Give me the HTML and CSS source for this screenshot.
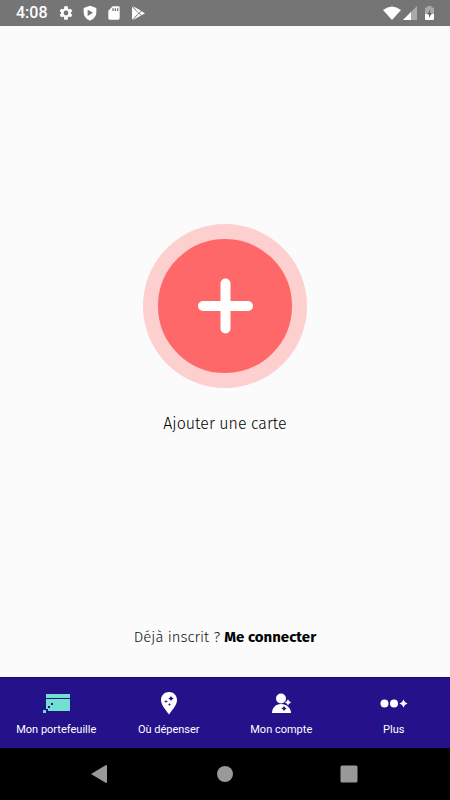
FILE: index.html
```html
<!DOCTYPE html>
<html lang="fr">
<head>
<meta charset="utf-8">
<meta name="viewport" content="width=device-width, initial-scale=1">
<title>Mon portefeuille</title>
<link rel="stylesheet" href="styles.css">
</head>
<body>
<header class="status">
  <time class="clock">4:08</time>
  <div class="notifications">
    <svg width="16" height="16" viewBox="0 0 24 24" aria-hidden="true"><path fill="#fff" fill-rule="evenodd" d="M19.4 13a7.500 7.500 0 0 0 0-2l2.100-1.600-2.200-3.800-2.600 1a8 8 0 0 0-1.700-1L14.600 2H9.400L9 5.600a8 8 0 0 0-1.700 1l-2.600-1-2.200 3.800L4.600 11a7.500 7.500 0 0 0 0 2l-2.100 1.600 2.200 3.800 2.600-1a8 8 0 0 0 1.700 1l.4 3.600h5.200l.4-3.600a8 8 0 0 0 1.700-1l2.600 1 2.200-3.800zM12 15.600a3.600 3.600 0 1 1 0-7.200 3.600 3.600 0 0 1 0 7.200z"/></svg>
    <svg width="16" height="16" viewBox="0 0 24 24" aria-hidden="true"><path fill="#fff" fill-rule="evenodd" d="M12 1l9.500 3.500V11c0 5.800-4 10.500-9.500 12.500C6.500 21.500 2.500 16.800 2.500 11V4.500zM8.500 7v9.500l8-4.700z"/></svg>
    <svg width="16" height="16" viewBox="0 0 24 24" aria-hidden="true"><path fill="#fff" fill-rule="evenodd" d="M10 2h8.500A2 2 0 0 1 20.500 4v16a2 2 0 0 1-2 2h-13a2 2 0 0 1-2-2V8.500zM9.500 5v4h2V5zm3.500 0v4h2V5zm3.500 0v4h2V5z"/></svg>
    <svg width="16" height="16" viewBox="0 0 24 24" aria-hidden="true"><path fill="#fff" d="M4 1.500l12.500 7.200-3.200 3.200zM3 2.500l9.500 9.800L3 22zM4 23l9.300-9.800 3.200 2.600zM17.500 9.300L22.500 12.300l-5 3-3.200-3z"/></svg>
  </div>
  <div class="signals">
    <svg width="18" height="14" viewBox="0 0 18 14" aria-hidden="true"><path fill="#fff" d="M0 4Q9-3 18 4L9 14z"/></svg>
    <svg width="14" height="14" viewBox="0 0 14 14" aria-hidden="true"><path fill="#aaa" d="M14 0v14H0z"/><path fill="#fff" d="M8 6v8H0z"/></svg>
    <svg class="battery" width="9" height="14" viewBox="0 0 9 14" aria-hidden="true"><path fill="#aaa" d="M2.500 0h4v1.500H8q1 0 1 1V8H0V2.500q0-1 1-1h1.500z"/><path fill="#fff" d="M0 8h9v5q0 1-1 1H1q-1 0-1-1z"/><path fill="#666" d="M5.500 3L2 8.500h2V12l3-5H5z"/></svg>
  </div>
</header>
<main class="wallet">
  <section class="add">
    <button class="add-button" type="button" aria-labelledby="add-label">
      <svg width="56" height="56" viewBox="0 0 56 56" aria-hidden="true"><path d="M28.500 5.500v45M6 28h45" stroke="#fff" stroke-width="10" stroke-linecap="round"/></svg>
    </button>
    <span class="add-label" id="add-label">Ajouter une carte</span>
  </section>
  <p class="login">Déjà inscrit ? <a href="#connexion">Me connecter</a></p>
</main>
<nav class="tabs">
  <a class="tab" href="#portefeuille" aria-current="page">
    <svg width="28" height="24" viewBox="0 0 28 24" aria-hidden="true"><g fill="#72e0d1"><path d="M4 2h24v4H4zM4 7h24v12H6v-2H4z"/><path d="M1 18h3v3H1z"/></g><path fill="#25128a" d="M6 14h2v2H6zM9 11h2v2H9z"/></svg>
    <span>Mon portefeuille</span>
  </a>
  <a class="tab" href="#depenser">
    <svg width="28" height="24" viewBox="0 0 28 24" aria-hidden="true"><path fill="#fff" d="M14 0c4.500 0 8 3.500 8 8 0 5-4 9-8 14.500C10 17 6 13 6 8c0-4.500 3.500-8 8-8z"/><path fill="#25128a" d="M16 4l1 1.500 1.700 1-1.700 1L16 9l-1-1.500-1.700-1 1.700-1zM11 8l.6 1.100 1.400.4-1.400.5L11 11l-.6-1-1.400-.5 1.400-.4zM14.500 11l.5 1 1 .5-1 .5-.5 1-.5-1-1-.5 1-.5z"/></svg>
    <span>Où dépenser</span>
  </a>
  <a class="tab" href="#compte">
    <svg width="28" height="24" viewBox="0 0 28 24" aria-hidden="true"><circle cx="14" cy="6.500" r="5" fill="#fff"/><path fill="#fff" d="M5 21c0-5 3.500-9 9-9s10 4 10 9z"/><path fill="#fff" stroke="#25128a" stroke-width=".4" d="M21 7l1.300 2.100 2.100 1.300-2.100 1.300-1.300 2.100-1.300-2.100-2.100-1.300 2.100-1.300z"/><path fill="#25128a" d="M17 14l1 1.500 1.700 1-1.700 1L17 19l-1-1.500-1.700-1 1.700-1z"/></svg>
    <span>Mon compte</span>
  </a>
  <a class="tab" href="#plus">
    <svg width="28" height="24" viewBox="0 0 28 24" aria-hidden="true"><g fill="#fff"><circle cx="4.500" cy="11.500" r="4"/><circle cx="14" cy="11.500" r="4"/><path d="M23.500 7.500l1.400 2.600 2.600 1.400-2.600 1.400-1.400 2.600-1.400-2.600-2.600-1.400 2.600-1.400z"/></g></svg>
    <span>Plus</span>
  </a>
</nav>
<footer class="system">
  <button type="button" aria-label="Retour"><svg width="18" height="18" viewBox="0 0 18 18" aria-hidden="true"><path fill="#999" d="M14 0q1 0 1 1v16q0 1-1 1L-1 9z"/></svg></button>
  <button type="button" aria-label="Accueil"><svg width="18" height="18" viewBox="0 0 18 18" aria-hidden="true"><circle fill="#999" cx="9" cy="9" r="8"/></svg></button>
  <button type="button" aria-label="Applications récentes"><svg width="18" height="18" viewBox="0 0 18 18" aria-hidden="true"><rect fill="#999" x="0.500" y="0.500" width="17" height="17" rx="1.500"/></svg></button>
</footer>
</body>
</html>
```
FILE: styles.css
```css
* {
  box-sizing: border-box;
}

body {
  display: flex;
  flex-direction: column;
  min-height: 100vh;
  margin: 0;
  background: #fbfbfb;
  color: #111;
  font-family: Roboto, sans-serif;
}

svg {
  display: block;
  overflow: visible;
}

button {
  padding: 0;
  border: 0;
  cursor: pointer;
}

a {
  color: inherit;
  text-decoration: none;
}

.status {
  display: flex;
  align-items: center;
  height: 26px;
  padding: 0 16px;
  background: #757575;
  color: #fff;
}

.clock {
  font-size: 16px;
  font-weight: 500;
  line-height: 26px;
}

.notifications {
  display: flex;
  gap: 8px;
  margin-left: 10px;
}

.signals {
  display: flex;
  align-items: center;
  gap: 2px;
  margin-left: auto;
}

.battery {
  margin-left: 6px;
}

.wallet {
  display: flex;
  flex: 1;
  flex-direction: column;
  padding: 7px 16px 30px;
  font-family: "Fira Sans", "Noto Sans", sans-serif;
  text-align: center;
}

.add {
  display: flex;
  flex: 1;
  flex-direction: column;
  align-items: center;
  justify-content: center;
  gap: 24px;
}

.add-button {
  display: grid;
  place-items: center;
  width: 164px;
  height: 164px;
  border: 15px solid #fdcfcf;
  border-radius: 50%;
  background: #ff6868;
}

.add-label {
  color: #000;
  font-size: 16px;
  font-weight: 300;
  line-height: 24px;
}

.login {
  margin: 0;
  font-size: 15px;
  font-weight: 300;
  line-height: 20px;
}

.login a {
  color: #000;
  font-weight: 700;
}

.tabs {
  display: grid;
  grid-template-columns: repeat(4, 1fr);
  border-top: 1px solid #1a0b70;
  background: #25128a;
  color: #fff;
}

.tab {
  display: flex;
  flex-direction: column;
  align-items: center;
  gap: 6px;
  padding: 14px 0 10px;
  font-size: 11px;
  line-height: 16px;
}

.system {
  display: flex;
  align-items: center;
  justify-content: center;
  gap: 106px;
  height: 52px;
  background: #000;
}

.system button {
  background: none;
}
```
